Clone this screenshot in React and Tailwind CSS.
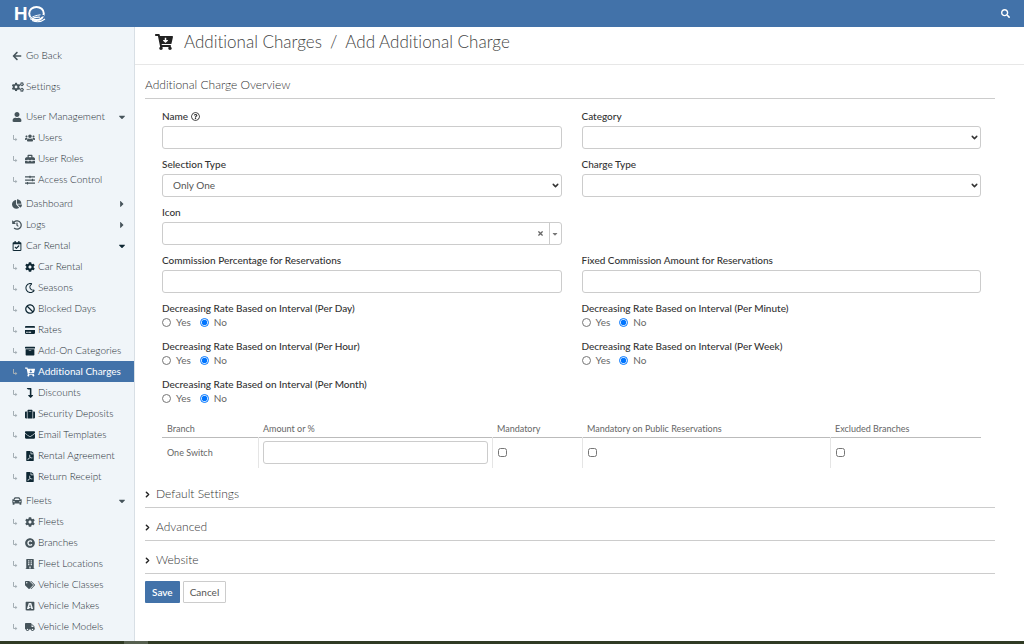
import { useState } from "react";
import {
  FaArrowLeft,
  FaCogs,
  FaUser,
  FaUsers,
  FaToolbox,
  FaSlidersH,
  FaChartPie,
  FaHistory,
  FaRegCalendarCheck,
  FaCog,
  FaRegMoon,
  FaBan,
  FaCreditCard,
  FaArchive,
  FaCartArrowDown,
  FaLevelDownAlt,
  FaSuitcase,
  FaEnvelope,
  FaFilePdf,
  FaCar,
  FaCopyright,
  FaBuilding,
  FaTags,
  FaBuysellads,
  FaTruck,
  FaCaretDown,
  FaCaretRight,
  FaSearch,
  FaRegQuestionCircle,
  FaTimes,
} from "react-icons/fa";
import { ChevronDown, ChevronRight } from "lucide-react";

const menu = [
  {
    label: "User Management",
    icon: FaUser,
    open: true,
    items: [
      { label: "Users", icon: FaUsers },
      { label: "User Roles", icon: FaToolbox },
      { label: "Access Control", icon: FaSlidersH },
    ],
  },
  { label: "Dashboard", icon: FaChartPie },
  { label: "Logs", icon: FaHistory },
  {
    label: "Car Rental",
    icon: FaRegCalendarCheck,
    open: true,
    dark: true,
    items: [
      { label: "Car Rental", icon: FaCog },
      { label: "Seasons", icon: FaRegMoon },
      { label: "Blocked Days", icon: FaBan },
      { label: "Rates", icon: FaCreditCard },
      { label: "Add-On Categories", icon: FaArchive },
      { label: "Additional Charges", icon: FaCartArrowDown, active: true },
      { label: "Discounts", icon: FaLevelDownAlt },
      { label: "Security Deposits", icon: FaSuitcase },
      { label: "Email Templates", icon: FaEnvelope },
      { label: "Rental Agreement", icon: FaFilePdf },
      { label: "Return Receipt", icon: FaFilePdf },
    ],
  },
  {
    label: "Fleets",
    icon: FaCar,
    open: true,
    items: [
      { label: "Fleets", icon: FaCog },
      { label: "Branches", icon: FaCopyright },
      { label: "Fleet Locations", icon: FaBuilding },
      { label: "Vehicle Classes", icon: FaTags },
      { label: "Vehicle Makes", icon: FaBuysellads },
      { label: "Vehicle Models", icon: FaTruck },
    ],
  },
];

const intervals = ["Day", "Minute", "Hour", "Week", "Month"];

const control =
  "block h-[23px] w-full rounded-[3px] border border-[#ccc] bg-white text-[10px] text-[#555] outline-none focus:border-[#4272a9]";

const Logo = () => (
  <a href="#home" aria-label="HQ" className="flex h-[27px] items-center">
    <span className="font-[Inter] text-[18px] leading-6 font-bold text-white">H</span>
    {/* ring with the road running through it */}
    <svg viewBox="0 0 19 18" className="h-[18px] w-[19px]" fill="none">
      <ellipse cx="9.500" cy="8.500" rx="7.300" ry="6.600" stroke="#fff" strokeWidth="2" />
      <path d="M0 15.500C5 12 10 10.500 17 10.800" stroke="#4272a9" strokeWidth="1.600" />
      <path d="M3 13.500C6 11.500 9 10.300 13.500 9.800" stroke="#fff" strokeWidth="1" />
      <path d="M3.500 14.500C7 12.500 10 12 13 12.200M5 15.500C10 17.500 14.500 16.800 18 14" stroke="#fff" strokeWidth="1.100" />
    </svg>
  </a>
);

const SubItem = ({ item, dark }) => {
  const Icon = item.icon;
  return (
    <li>
      <a
        href="#page"
        className={`flex h-[21px] items-center pl-3 ${
          item.active ? "bg-[#4272a9] font-normal text-white" : ""
        }`}
      >
        <svg viewBox="0 0 6 8" className="mr-[5px] h-2 w-[6px] shrink-0 text-[#a5afb5]" fill="none">
          <path d="M1.500 1v4.500H4" stroke="currentColor" strokeWidth="1" />
          <path d="M3.300 3.700L5.300 5.500L3.300 7.300Z" fill="currentColor" />
        </svg>
        <span className="mr-[2px] flex w-[13px] shrink-0 justify-center">
          <Icon
            className={`size-[10px] ${
              item.active ? "text-white" : dark ? "text-[#0e2733]" : "text-[#46545b]"
            }`}
          />
        </span>
        <span className="whitespace-nowrap">{item.label}</span>
      </a>
    </li>
  );
};

const MenuGroup = ({ group }) => {
  const [open, setOpen] = useState(!!group.open);
  const Icon = group.icon;
  const Caret = open ? FaCaretDown : FaCaretRight;
  return (
    <li className={group.items ? "mb-[3px]" : ""}>
      <button
        type="button"
        onClick={() => setOpen(!open)}
        className="flex h-[21px] w-full items-center gap-1 pr-[7px] pl-3"
      >
        <Icon className={`size-[10px] ${group.dark ? "text-[#0e2733]" : "text-[#46545b]"}`} />
        <span className="flex-1 text-left">{group.label}</span>
        <Caret className={`size-[10px] ${group.dark ? "text-[#0e2733]" : "text-[#46545b]"}`} />
      </button>
      {open && group.items && (
        <ul>
          {group.items.map((item) => (
            <SubItem key={item.label} item={item} dark={group.dark} />
          ))}
        </ul>
      )}
    </li>
  );
};

const Field = ({ id, label, help, children }) => (
  <div className="h-12">
    <label
      htmlFor={id}
      className="mb-[2px] flex h-4 items-center gap-[3px] text-[10px] font-medium text-[#333]"
    >
      {label}
      {help && <FaRegQuestionCircle className="size-[9px]" />}
    </label>
    {children}
  </div>
);

const SelectBox = ({ id, options }) => (
  <div className="relative">
    <select id={id} className={`${control} appearance-none pr-5 pl-[10px] font-normal`}>
      {options.map((o) => (
        <option key={o}>{o}</option>
      ))}
    </select>
    <ChevronDown
      className="pointer-events-none absolute top-[7px] right-[2px] size-[9px] text-[#333]"
      strokeWidth={4}
    />
  </div>
);

const RadioField = ({ interval }) => {
  const [value, setValue] = useState("No");
  return (
    <fieldset className="h-[38px]">
      <legend className="h-4 text-[10px] leading-4 font-medium text-[#333]">
        Decreasing Rate Based on Interval (Per {interval})
      </legend>
      <div className="flex h-[13px] items-center gap-[9px]">
        {["Yes", "No"].map((option) => (
          <label key={option} className="flex items-center gap-[5px] font-normal text-[#666]">
            <input
              type="radio"
              name={interval}
              checked={value === option}
              onChange={() => setValue(option)}
              className="size-[9px] accent-[#0075ff]"
            />
            {option}
          </label>
        ))}
      </div>
    </fieldset>
  );
};

const Section = ({ title }) => {
  const [open, setOpen] = useState(false);
  return (
    <button
      type="button"
      aria-expanded={open}
      onClick={() => setOpen(!open)}
      className="flex h-[33px] w-full items-center gap-1 border-b border-[#ccc] pt-[6px] text-xs text-[#333]"
    >
      <ChevronRight className="-ml-[2px] size-[9px] text-[#222]" strokeWidth={4} />
      {title}
    </button>
  );
};

const BranchTable = () => (
  <table className="mt-[7px] w-full table-fixed border-collapse text-[9px] text-[#666]">
    <colgroup>
      <col className="w-[96px]" />
      <col className="w-[234px]" />
      <col className="w-[90px]" />
      <col className="w-[248px]" />
      <col />
    </colgroup>
    <thead>
      <tr className="h-4 border-b border-[#bbb] text-left">
        <th className="px-[5px] font-normal">Branch</th>
        <th className="px-[5px] font-normal">Amount or %</th>
        <th className="px-[5px] font-normal">Mandatory</th>
        <th className="px-[5px] font-normal">Mandatory on Public Reservations</th>
        <th className="px-[5px] font-normal">Excluded Branches</th>
      </tr>
    </thead>
    <tbody>
      <tr className="h-[31px] divide-x divide-[#e5e5e5]">
        <td className="px-[5px] font-normal">One Switch</td>
        <td className="px-1">
          <input type="text" aria-label="Amount or %" className={`${control} px-2`} />
        </td>
        {["Mandatory", "Mandatory on Public Reservations", "Excluded Branches"].map((name) => (
          <td key={name} className="px-[5px]">
            <input type="checkbox" aria-label={name} className="block size-[9px]" />
          </td>
        ))}
      </tr>
    </tbody>
  </table>
);

export default function App() {
  return (
    <div className="flex min-h-screen flex-col bg-white font-[Lato,sans-serif] text-[10px] leading-[13px] font-light text-[#444] [font-variant-ligatures:none]">
      <header className="flex h-[27px] items-center justify-between bg-[#4272a9] px-[14px]">
        <Logo />
        <button type="button" aria-label="Search">
          <FaSearch className="size-[9px] text-white" />
        </button>
      </header>

      <div className="flex flex-1">
        <nav className="w-[135px] shrink-0 border-r border-[#d8dfe5] bg-[#f0f5f9] pt-[18px] text-[#1f2e36]">
          <a href="#back" className="mb-[10px] flex h-[21px] items-center gap-1 pl-3">
            <FaArrowLeft className="size-[10px] text-[#46545b]" />
            Go Back
          </a>
          <a href="#settings" className="mb-[9px] flex h-[21px] items-center gap-[2px] pl-3">
            <FaCogs className="size-3 text-[#46545b]" />
            Settings
          </a>
          <ul>
            {menu.map((group) => (
              <MenuGroup key={group.label} group={group} />
            ))}
          </ul>
        </nav>

        <main className="min-w-0 flex-1">
          <div className="flex h-[38px] items-center gap-[11px] border-b border-[#e7e7e7] pb-2 pl-5">
            <FaCartArrowDown className="size-[18px] text-[#222]" />
            <h1 className="flex gap-2 text-[17px] leading-5 text-[#444]">
              <span>Additional Charges</span>
              <span>/</span>
              <span>Add Additional Charge</span>
            </h1>
          </div>

          <form className="mr-[29px] ml-[10px]" onSubmit={(e) => e.preventDefault()}>
            <h2 className="flex h-[34px] items-center border-b border-[#ccc] pt-[6px] text-xs text-[#333]">
              Additional Charge Overview
            </h2>

            <div className="mb-[7px] pt-[9px] pr-[14px] pl-[17px]">
              <div className="grid grid-cols-2 gap-x-5">
                <Field id="name" label="Name" help>
                  <input id="name" type="text" className={`${control} px-2`} />
                </Field>
                <Field id="category" label="Category">
                  <SelectBox id="category" options={[""]} />
                </Field>
                <Field id="selection" label="Selection Type">
                  <SelectBox id="selection" options={["Only One", "Multiple"]} />
                </Field>
                <Field id="charge" label="Charge Type">
                  <SelectBox id="charge" options={[""]} />
                </Field>
                <Field id="icon" label="Icon">
                  <div className="flex h-[23px] items-center rounded-[3px] border border-[#ccc]">
                    <input id="icon" type="text" className="min-w-0 flex-1 px-2 outline-none" />
                    <button type="button" aria-label="Clear" className="px-[5px]">
                      <FaTimes className="size-[7px] text-[#666]" />
                    </button>
                    <button
                      type="button"
                      aria-label="Open"
                      className="flex w-3 items-center justify-center self-stretch border-l border-[#ccc]"
                    >
                      <FaCaretDown className="size-2 text-[#777]" />
                    </button>
                  </div>
                </Field>
                <div />
                <Field id="percentage" label="Commission Percentage for Reservations">
                  <input id="percentage" type="text" className={`${control} px-2`} />
                </Field>
                <Field id="fixed" label="Fixed Commission Amount for Reservations">
                  <input id="fixed" type="text" className={`${control} px-2`} />
                </Field>
                {intervals.map((interval) => (
                  <RadioField key={interval} interval={interval} />
                ))}
              </div>
              <BranchTable />
            </div>

            <Section title="Default Settings" />
            <Section title="Advanced" />
            <Section title="Website" />

            <div className="flex gap-[3px] pt-[7px]">
              <button
                type="submit"
                className="h-[22px] rounded-[1px] bg-[#4272a9] px-[7px] font-semibold text-white"
              >
                Save
              </button>
              <button
                type="button"
                className="h-[22px] rounded-[1px] border border-[#ccc] px-[6px] font-normal text-[#555]"
              >
                Cancel
              </button>
            </div>
          </form>
        </main>
      </div>

      <footer className="h-[3px] bg-[#303b24] pl-[124px]">
        <div className="h-full w-6 bg-[#56604f]" />
      </footer>
    </div>
  );
}
